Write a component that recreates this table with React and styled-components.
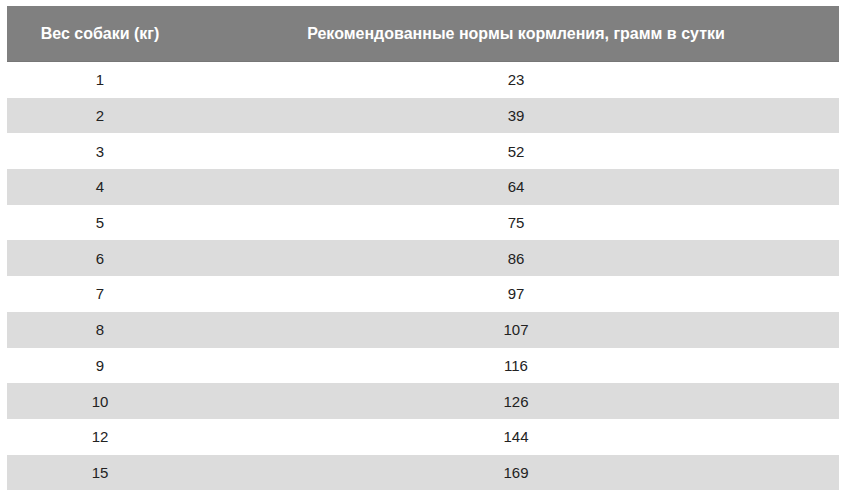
import React from 'react';
import styled, { createGlobalStyle } from 'styled-components';

const rows = [
  [1, 23], [2, 39], [3, 52], [4, 64], [5, 75], [6, 86],
  [7, 97], [8, 107], [9, 116], [10, 126], [12, 144], [15, 169],
];

const Global = createGlobalStyle`
  body {
    margin: 0;
    background: #ffffff;
    font-family: "Liberation Sans", Arial, sans-serif;
  }
`;

const Page = styled.div`
  padding: 6px 9px 0 7px;
`;

const Table = styled.div`
  display: grid;
  grid-template-columns: 186px 1fr;
  grid-template-rows: 56px repeat(12, 35.7px);
  width: 832px;
`;

const HeadCell = styled.div`
  display: flex;
  align-items: center;
  justify-content: center;
  background: #808080;
  color: #ffffff;
  font-weight: bold;
  font-size: 16px;
  border-bottom: 1px solid #777;
`;

const Cell = styled.div`
  display: flex;
  align-items: center;
  justify-content: center;
  font-size: 15px;
  color: #222222;
  background: ${(p) => (p.$odd ? '#dcdcdc' : '#ffffff')};
`;

export default function App() {
  return (
    <Page>
      <Global />
      <Table>
        <HeadCell>Вес собаки (кг)</HeadCell>
        <HeadCell>Рекомендованные нормы кормления, грамм в сутки</HeadCell>
        {rows.map(([w, g], i) => (
          <React.Fragment key={w}>
            <Cell $odd={i % 2 === 1}>{w}</Cell>
            <Cell $odd={i % 2 === 1}>{g}</Cell>
          </React.Fragment>
        ))}
      </Table>
    </Page>
  );
}
